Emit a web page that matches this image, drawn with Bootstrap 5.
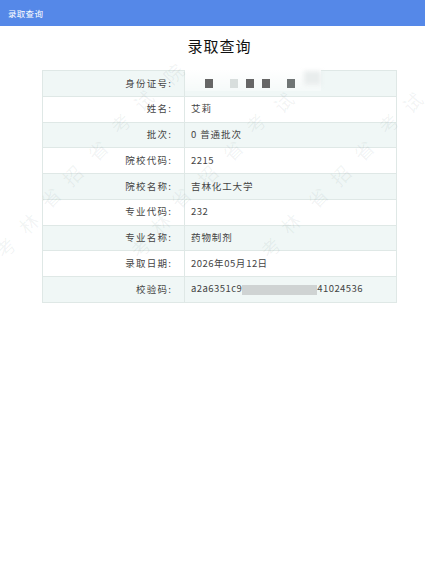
<!doctype html>
<html lang="zh"><head><meta charset="utf-8">
<link href="https://cdn.jsdelivr.net/npm/bootstrap@5.3.0/dist/css/bootstrap.min.css" rel="stylesheet">
<style>
html,body{height:100%}
body{background:#fff;font-family:"Noto Sans CJK SC","Liberation Sans",sans-serif;color:#333;overflow:hidden;position:relative}
.topbar{height:26px;background:#5588e8;color:#fff;font-size:8.5px;letter-spacing:.3px}
.result-wrap{padding:0 28px 0 42px}
.page-title{font-size:15px;font-weight:400;letter-spacing:1px;color:#111;margin:0;padding:11px 0 16px;line-height:17px}
.result-table{margin:0;font-size:9.5px;letter-spacing:1.2px;border-color:#dfe8e6;--bs-table-striped-bg:#f0f7f6;--bs-table-striped-color:#444;--bs-table-color:#444;--bs-table-bg:transparent}
.result-table th,.result-table td{height:25.78px;padding:0 6px;vertical-align:middle;font-weight:400;line-height:1}
.result-table th{width:142px;text-align:right;padding-right:12px}
.result-table td{letter-spacing:.9px;position:relative}
.num{letter-spacing:.45px}
.mask{display:flex;align-items:center;padding-left:14px;position:relative}
.mask i{display:block;width:8px;height:9px;background:#666;margin-right:8px}
.mask i.pale{background:#d8dedd;margin-left:9px}
.mask i.gap-left{margin-left:9px;background:#707575}
.smear{position:absolute;left:0;top:-1px;width:136px;height:21px;background:linear-gradient(#fff,rgba(255,255,255,.35))}
.blob{position:absolute;left:119px;top:0;width:17px;height:14px;background:#e9eded;filter:blur(2px)}
.blur{display:inline-block;width:75px;height:10px;vertical-align:middle;background:#cfd3d3;filter:blur(.7px)}
.wm{position:absolute;left:0;top:0;pointer-events:none}
.wm text{font-size:19px;fill:#4a5f5f;fill-opacity:.075;text-anchor:middle;dominant-baseline:central}
</style></head><body>
<nav class="navbar topbar p-0 ps-2 d-flex align-items-center justify-content-start"><span>录取查询</span></nav>
<div class="result-wrap">
<h1 class="page-title text-center">录取查询</h1>
<table class="table table-bordered table-striped result-table">
<tbody>
<tr><th>身份证号:</th><td><div class="smear"></div><div class="blob"></div><div class="mask"><i></i><i class="pale"></i><i></i><i></i><i class="gap-left"></i></div></td></tr>
<tr><th>姓名:</th><td>艾莉</td></tr>
<tr><th>批次:</th><td>0 普通批次</td></tr>
<tr><th>院校代码:</th><td><span class="num">2215</span></td></tr>
<tr><th>院校名称:</th><td>吉林化工大学</td></tr>
<tr><th>专业代码:</th><td><span class="num">232</span></td></tr>
<tr><th>专业名称:</th><td>药物制剂</td></tr>
<tr><th>录取日期:</th><td><span class="num">2026</span>年<span class="num">05</span>月<span class="num">12</span>日</td></tr>
<tr><th>校验码:</th><td><span class="num">a2a6351c9</span><span class="blur"></span><span class="num">41024536</span></td></tr>
</tbody></table>
</div>
<svg class="wm" width="425" height="578" aria-hidden="true">
<g>
<text transform="translate(5,247) rotate(-45)">考</text><text transform="translate(28,223) rotate(-45)">林</text><text transform="translate(50,197) rotate(-45)">省</text><text transform="translate(72,175) rotate(-45)">招</text><text transform="translate(97,150) rotate(-45)">省</text><text transform="translate(120,123) rotate(-45)">考</text><text transform="translate(143,100) rotate(-45)">试</text><text transform="translate(173,73) rotate(-45)">院</text>
<text transform="translate(140,247) rotate(-45)">考</text><text transform="translate(160,223) rotate(-45)">林</text><text transform="translate(180,197) rotate(-45)">省</text><text transform="translate(207,175) rotate(-45)">招</text><text transform="translate(232,150) rotate(-45)">省</text><text transform="translate(255,123) rotate(-45)">考</text><text transform="translate(283,102) rotate(-45)">试</text>
<text transform="translate(270,247) rotate(-45)">考</text><text transform="translate(290,223) rotate(-45)">林</text><text transform="translate(317,197) rotate(-45)">省</text><text transform="translate(340,175) rotate(-45)">招</text><text transform="translate(363,150) rotate(-45)">省</text><text transform="translate(388,123) rotate(-45)">考</text><text transform="translate(412,102) rotate(-45)">试</text>
</g></svg>
</body></html>
